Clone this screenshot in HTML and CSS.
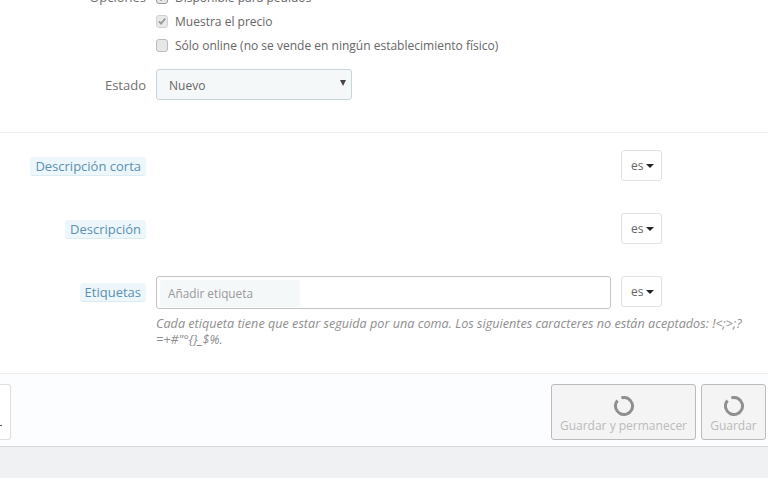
FILE: index.html
```html
<!DOCTYPE html>
<html lang="es">
<head>
<meta charset="utf-8">
<title>Producto</title>
<link rel="stylesheet" href="styles.css">
</head>
<body>
<div class="page">
  <section class="form-top">
    <div class="row row-options">
      <div class="label">Opciones</div>
      <div class="checks">
        <div class="check"><span class="box box-dark"><svg viewBox="0 0 12 12" width="12" height="12"><path d="M3 6.4 5 8.6 9.2 3.6" fill="none" stroke="#555" stroke-width="1.8"/></svg></span>Disponible para pedidos</div>
        <div class="check"><span class="box box-on"><svg viewBox="0 0 12 12" width="12" height="12"><path d="M3 6.4 5 8.6 9.2 3.6" fill="none" stroke="#999" stroke-width="1.8"/></svg></span>Muestra el precio</div>
        <div class="check"><span class="box"></span>Sólo online (no se vende en ningún establecimiento físico)</div>
      </div>
    </div>
    <div class="row row-state">
      <div class="label">Estado</div>
      <div class="select">Nuevo<span class="select-arrow"></span></div>
    </div>
  </section>
  <section class="form-lang">
    <div class="row row-lang">
      <div class="label"><span class="pill">Descripción corta</span></div>
      <div class="spacer"></div>
      <div class="lang">es<span class="caret"></span></div>
    </div>
    <div class="row row-lang">
      <div class="label"><span class="pill">Descripción</span></div>
      <div class="spacer"></div>
      <div class="lang">es<span class="caret"></span></div>
    </div>
    <div class="row row-tags">
      <div class="label"><span class="pill">Etiquetas</span></div>
      <div class="tags-col">
        <div class="tags-line">
          <div class="tag-input"><span class="tag-placeholder">Añadir etiqueta</span></div>
          <div class="lang">es<span class="caret"></span></div>
        </div>
        <p class="help">Cada etiqueta tiene que estar seguida por una coma. Los siguientes caracteres no están aceptados: !&lt;;&gt;;?<br>=+#"°{}_$%.</p>
      </div>
    </div>
  </section>
  <footer class="footer">
    <div class="btn-cancel"><span class="dot"></span></div>
    <div class="btn btn-wide"><svg class="spin" viewBox="0 0 20 20" width="20" height="20"><circle cx="10" cy="10" r="8.5" fill="none" stroke="#8f8f8f" stroke-width="3" stroke-dasharray="48.4 5" transform="rotate(-108 10 10)"/></svg>Guardar y permanecer</div>
    <div class="btn btn-save"><svg class="spin" viewBox="0 0 20 20" width="20" height="20"><circle cx="10" cy="10" r="8.5" fill="none" stroke="#8f8f8f" stroke-width="3" stroke-dasharray="48.4 5" transform="rotate(-108 10 10)"/></svg>Guardar</div>
  </footer>
</div>
</body>
</html>
```
FILE: styles.css
```css
* { box-sizing: border-box; }
html, body { margin: 0; height: 478px; overflow: hidden; }
body { background: #eff1f2; font-family: "Open Sans", sans-serif; font-size: 12px; color: #666; }
.page { width: 768px; height: 478px; overflow: hidden; }

.form-top { height: 148px; margin-top: -15px; background: #fff; border-bottom: 1px solid #eef0f1; }
.row { display: flex; }
.label { width: 146px; flex: none; text-align: right; font-size: 13px; margin-right: 10px; color: #707070; }
.row-options .label { line-height: 24px; }
.checks { display: flex; flex-direction: column; }
.check { display: flex; align-items: center; height: 24px; font-size: 12.03px; color: #666; }
.box { width: 12px; height: 13px; margin: 1px 7px 0 0; border: 1px solid #bbb; border-radius: 3px; background: #e7e7e7; flex: none; display: block; }
.box svg { display: block; margin: -1px 0 0 -1px; }
.box-on { background: #e9e9e9; border-color: #d2d2d2; }
.box-dark { background: #e7e7e7; border-color: #999; }
.row-state { margin-top: 12px; align-items: center; }
.select { position: relative; width: 196px; height: 31px; line-height: 32px; padding-left: 12px; font-size: 12px; color: #666; background: #f5f8f9; border: 1px solid #c7d6db; border-radius: 3px; }
.select-arrow { position: absolute; right: 5px; top: 10px; border-left: 3px solid transparent; border-right: 3px solid transparent; border-top: 6px solid #444; }

.form-lang { background: #fff; height: 241px; padding-top: 17px; border-bottom: 1px solid #eef0f1; }
.row-lang { height: 63px; }
.row-lang .label, .row-tags .label { padding-top: 7px; }
.pill { display: inline-block; height: 19px; line-height: 18px; padding: 0 5px; font-size: 13px; color: #5b8fb3; background: #edf7fb; border-radius: 3px; border-bottom: 1px solid #dcebf2; }
.spacer { width: 465px; flex: none; }
.lang { width: 41px; height: 31px; flex: none; line-height: 29px; padding-left: 9px; font-size: 12px; color: #666; background: #fff; border: 1px solid #e2e2e2; border-radius: 3px; white-space: nowrap; }
.caret { display: inline-block; margin-left: 3px; vertical-align: 2px; border-left: 4px solid transparent; border-right: 4px solid transparent; border-top: 4px solid #222; }
.tags-col { width: 600px; flex: none; }
.tags-line { display: flex; gap: 10px; }
.tag-input { width: 455px; height: 33px; padding: 3px; background: #fff; border: 1px solid #c4c4c4; border-radius: 3px; }
.tag-placeholder { display: block; width: 140px; height: 27px; line-height: 27px; padding-left: 8px; font-size: 11.8px; color: #999; background: #f5f8f9; border-radius: 3px; }
.help { margin: 6px 0 0; font-size: 12.65px; line-height: 16px; font-style: italic; color: #8e8e8e; white-space: nowrap; }

.footer { display: flex; height: 73px; padding: 10px 2px 0 0; background: #fcfdfe; border-bottom: 1px solid #d8dadb; }
.btn-cancel { position: relative; width: 11px; height: 56px; margin-right: auto; background: #fff; border: 1px solid #dfdfdf; border-left: 0; border-radius: 0 3px 3px 0; }
.dot { position: absolute; left: 0; top: 40px; width: 2px; height: 1px; background: #555; }
.btn { display: flex; flex-direction: column; align-items: center; height: 56px; padding-top: 11px; font-size: 12px; line-height: 16px; color: #bbb; background: #f4f4f4; border: 1px solid #bbb; border-radius: 3px; }
.btn-wide { width: 145px; }
.btn-save { width: 65px; margin-left: 5px; }
.spin { display: block; margin-bottom: 2px; flex: none; }
```
